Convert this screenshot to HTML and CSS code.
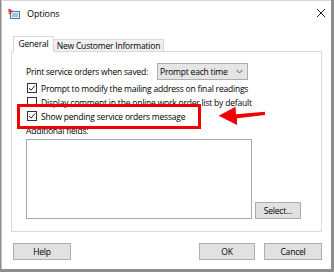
FILE: index.html
```html
<!DOCTYPE html>
<html>
<head>
<meta charset="utf-8">
<link rel="stylesheet" href="styles.css">
</head>
<body>
<div class="window">
  <div class="titlebar">
    <svg class="app-icon" width="12" height="12" viewBox="0 0 12 12">
      <rect x="2.5" y="3.5" width="9" height="7" fill="#e8f0f8" stroke="#4a78b0"/>
      <line x1="4" y1="6" x2="10" y2="6" stroke="#6b8fc0"/>
      <line x1="4" y1="8" x2="10" y2="8" stroke="#6b8fc0"/>
      <path d="M0.5 4 L3 1.5 M1 6 L4.5 2.5 M0.5 2 L1.5 1" stroke="#e02020" stroke-width="1.2" fill="none"/>
    </svg>
    <span class="title">Options</span>
    <svg class="close" width="10" height="10" viewBox="0 0 10 10">
      <path d="M1 1 L9 9 M9 1 L1 9" stroke="#222" stroke-width="1"/>
    </svg>
  </div>
  <div class="content">
    <div class="tabs">
      <div class="tab active">General</div>
      <div class="tab">New Customer Information</div>
    </div>
    <div class="panel">
      <div class="print-row">
        <span class="label">Print service orders when saved:</span>
        <div class="combo">
          <span>Prompt each time</span>
          <svg class="chev" width="7" height="5" viewBox="0 0 7 5"><path d="M0.5 1 L3.5 4 L6.5 1" stroke="#555" fill="none"/></svg>
        </div>
      </div>
      <div class="check"><span class="box"><svg width="8" height="8" viewBox="0 0 8 8"><path d="M1 4 L3 6.2 L7 1.5" stroke="#222" stroke-width="1" fill="none"/></svg></span>Prompt to modify the mailing address on final readings</div>
      <div class="check"><span class="box"></span>Display comment in the online work order list by default</div>
      <div class="check"><span class="box"><svg width="8" height="8" viewBox="0 0 8 8"><path d="M1 4 L3 6.2 L7 1.5" stroke="#222" stroke-width="1" fill="none"/></svg></span>Show pending service orders message</div>
      <div class="fields-label">Additional fields:</div>
      <div class="fields-row">
        <div class="textarea"></div>
        <div class="btn select-btn">Select...</div>
      </div>
      <div class="highlight"></div>
      <svg class="arrow" width="52" height="24" viewBox="0 0 52 24">
        <polygon points="3.7,11.7 20.5,2.7 21,10.3 50,7.7 50,11 22,14.3 22,21" fill="#f00000"/>
      </svg>
    </div>
    <div class="buttons">
      <div class="btn help">Help</div>
      <div class="right-btns">
        <div class="btn ok">OK</div>
        <div class="btn cancel">Cancel</div>
      </div>
    </div>
  </div>
</div>
</body>
</html>
```
FILE: styles.css
```css
* { box-sizing: border-box; }
html, body { margin: 0; padding: 0; }
body {
  width: 334px;
  height: 272px;
  background: #8e8e8e;
  font-family: "Open Sans", "Noto Sans", sans-serif;
  font-size: 8.5px;
  letter-spacing: -0.2px;
  color: #000;
  overflow: hidden;
  white-space: nowrap;
}
.window {
  margin-left: 1px;
  width: 330px;
  height: 269px;
  background: #fff;
  border-left: 1px solid #c4c4c4;
  border-top: 1px solid #d6d6d6;
}
.titlebar {
  height: 35px;
  display: flex;
  align-items: flex-start;
  padding-top: 6px;
  position: relative;
}
.app-icon { margin-left: 6px; margin-top: 1px; }
.title {
  margin-left: 7px;
  font-size: 9px;
  letter-spacing: -0.1px;
  line-height: 14px;
  color: #000;
}
.close { position: absolute; left: 314px; top: 7px; }
.content { padding-left: 9px; }
.tabs {
  display: flex;
  align-items: flex-end;
  height: 15px;
  padding-left: 2px;
  position: relative;
  z-index: 1;
}
.tab {
  height: 12px;
  border: 1px solid #d9d9d9;
  border-bottom: none;
  background: #f0f0f0;
  line-height: 11px;
  text-align: center;
  width: 111px;
  margin-left: -1px;
}
.tab.active {
  height: 16px;
  margin-bottom: -1px;
  background: #fff;
  width: 41px;
  margin-left: 0;
  line-height: 14px;
}
.panel {
  position: relative;
  width: 311px;
  height: 181px;
  border: 1px solid #d9d9d9;
  padding: 11px 0 0 14px;
}
.print-row {
  display: flex;
  align-items: center;
  height: 17px;
  margin-bottom: 1px;
}
.label { width: 131px; }
.combo {
  width: 91px;
  height: 17px;
  background: #e5e5e5;
  border: 1px solid #adadad;
  display: flex;
  align-items: center;
  justify-content: space-between;
  padding: 0 4px 0 2px;
}
.check {
  display: flex;
  align-items: center;
  height: 14px;
}
.box {
  width: 10px;
  height: 10px;
  border: 1px solid #333;
  margin-left: 1px;
  margin-right: 4px;
  display: flex;
  align-items: center;
  justify-content: center;
  background: #fff;
}
.box svg { display: block; }
.fields-label {
  height: 14px;
  line-height: 14px;
  margin-top: 1px;
}
.fields-row {
  display: flex;
  align-items: flex-end;
  margin-top: 1px;
}
.textarea {
  width: 226px;
  height: 80px;
  border: 1px solid #a9a9a9;
  background: #fff;
}
.btn {
  background: #e1e1e1;
  border: 1px solid #adadad;
  display: flex;
  align-items: center;
  justify-content: center;
  height: 17px;
}
.select-btn { width: 46px; margin-left: 3px; }
.highlight {
  position: absolute;
  left: 5px;
  top: 52px;
  width: 184px;
  height: 25px;
  border: 3px solid #f00000;
}
.arrow { position: absolute; left: 203px; top: 52px; }
.buttons {
  display: flex;
  justify-content: space-between;
  margin-top: 11px;
  padding-left: 2px;
  width: 311px;
}
.help { width: 58px; }
.right-btns { display: flex; gap: 9px; }
.ok { width: 56px; }
.cancel { width: 58px; }
```
